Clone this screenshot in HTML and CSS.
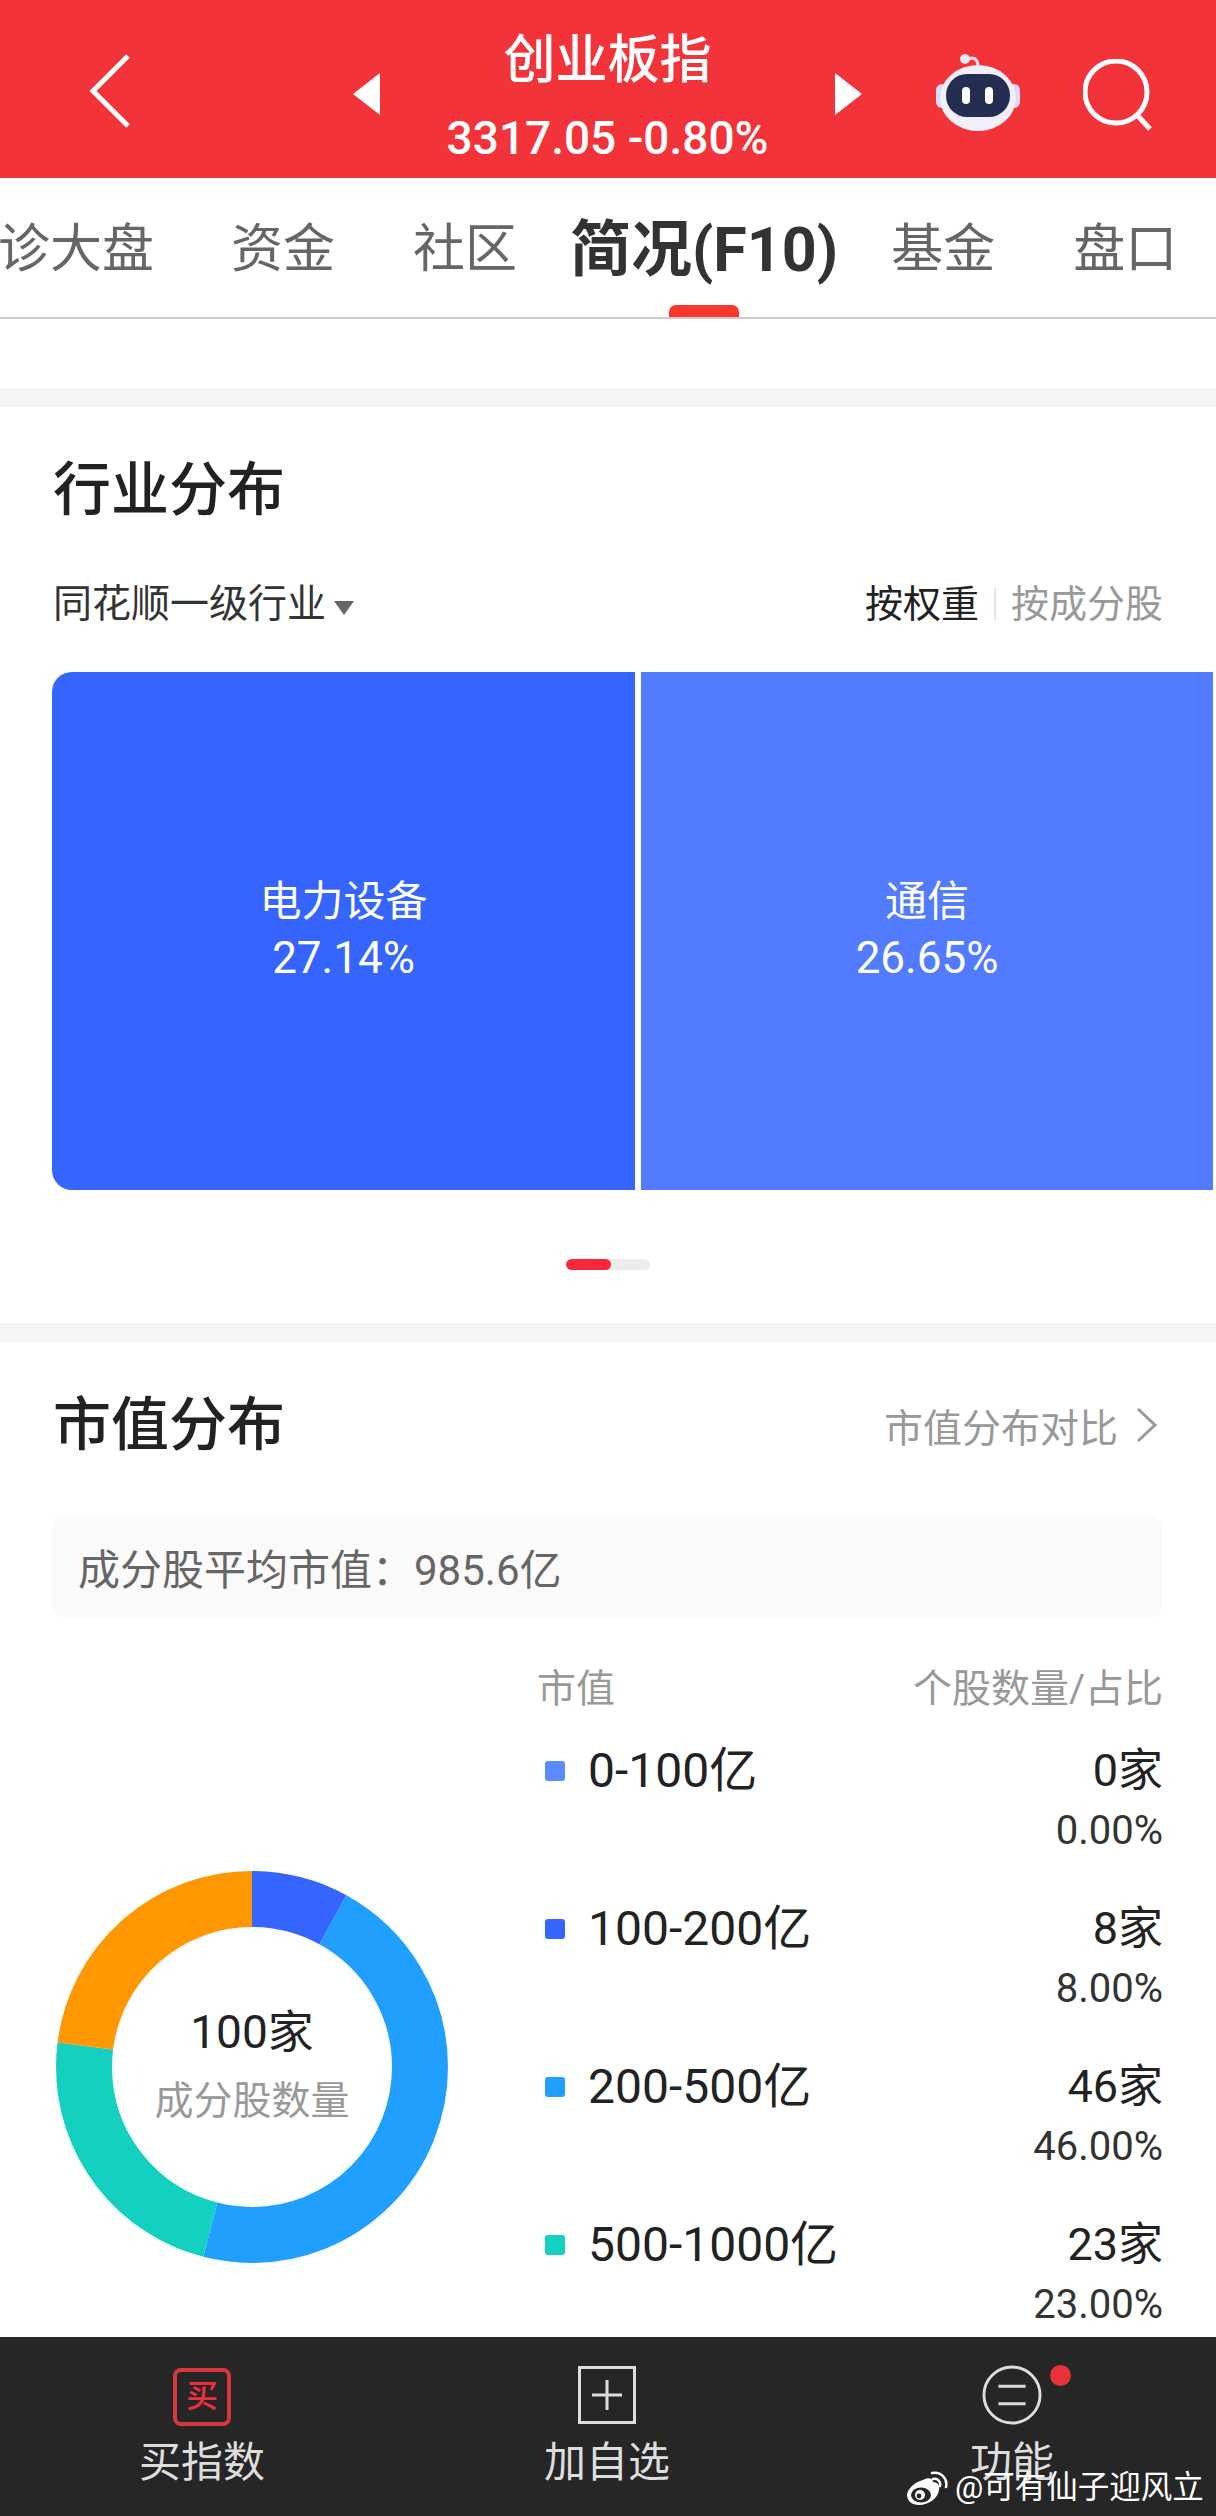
FILE: index.html
```html
<!DOCTYPE html>
<html lang="zh-CN">

<head>
    <meta charset="UTF-8">
    <meta name="viewport" content="width=device-width, initial-scale=1.0">
    <title>创业板指</title>
    <link rel="stylesheet" href="styles.css">
</head>

<body>

    <header class="topbar">
        <svg class="back" width="44" height="76" viewBox="0 0 44 76">
            <path d="M40 3 L5 38 L40 73" fill="none" stroke="#fff" stroke-width="5"/>
        </svg>
        <div class="index-switch">
            <span class="tri tri-left"></span>
            <div class="index-name">
                <div class="index-title">创业板指</div>
                <div class="index-quote">3317.05 -0.80%</div>
            </div>
            <span class="tri tri-right"></span>
        </div>
        <svg class="robot" width="84" height="80" viewBox="0 0 84 80">
            <path d="M31 9 C36 5 42 7 42 16" fill="none" stroke="#f3e6f2" stroke-width="3"/>
            <circle cx="29" cy="8" r="5" fill="#f3e6f2"/>
            <rect x="0" y="33" width="12" height="24" rx="6" fill="#dcd9f2"/>
            <rect x="72" y="33" width="12" height="24" rx="6" fill="#dcd9f2"/>
            <ellipse cx="42" cy="47" rx="38" ry="33" fill="#f2effa"/>
            <rect x="10" y="23" width="64" height="43" rx="21" fill="#242e52"/>
            <rect x="26" y="36" width="8" height="17" rx="4" fill="#fff"/>
            <rect x="49" y="36" width="8" height="17" rx="4" fill="#fff"/>
        </svg>
        <svg class="search" width="70" height="72" viewBox="0 0 70 72">
            <circle cx="33" cy="33" r="31" fill="none" stroke="#fff" stroke-width="5"/>
            <path d="M55 57 L67 70" fill="none" stroke="#fff" stroke-width="5"/>
        </svg>
    </header>

    <nav class="tabs">
        <span class="tab tab-first">诊大盘</span>
        <span class="tab">资金</span>
        <span class="tab">社区</span>
        <span class="tab tab-active">简况(F10)</span>
        <span class="tab">基金</span>
        <span class="tab">盘口</span>
    </nav>

    <main class="content">
        <div class="spacer"></div>

        <section class="card card-industry">
            <h2 class="card-title">行业分布</h2>
            <div class="filter-row">
                <div class="filter-left">同花顺一级行业<span class="caret"></span></div>
                <div class="filter-right">
                    <span class="on">按权重</span>
                    <span class="sep"></span>
                    <span class="off">按成分股</span>
                </div>
            </div>
            <div class="treemap">
                <div class="block block-a">
                    <div class="block-name">电力设备</div>
                    <div class="block-val">27.14%</div>
                </div>
                <div class="block block-b">
                    <div class="block-name">通信</div>
                    <div class="block-val">26.65%</div>
                </div>
            </div>
            <div class="pager"><span class="pager-on"></span></div>
        </section>

        <section class="card card-cap">
            <div class="cap-head">
                <h2 class="card-title">市值分布</h2>
                <div class="cap-link">市值分布对比
                    <svg width="22" height="36" viewBox="0 0 22 36">
                        <path d="M2 2 L19 18 L2 34" fill="none" stroke="#999" stroke-width="3"/>
                    </svg>
                </div>
            </div>
            <div class="avg-box">成分股平均市值：985.6亿</div>

            <div class="cap-body">
                <div class="donut">
                    <svg width="392" height="392" viewBox="0 0 392 392">
                        <g fill="none" stroke-width="56" transform="rotate(-90 196 196)">
                            <circle cx="196" cy="196" r="168" pathLength="100" stroke="#3564ff" stroke-dasharray="8 92"/>
                            <circle cx="196" cy="196" r="168" pathLength="100" stroke="#209fff" stroke-dasharray="46 54" stroke-dashoffset="-8"/>
                            <circle cx="196" cy="196" r="168" pathLength="100" stroke="#13d0c0" stroke-dasharray="23 77" stroke-dashoffset="-54"/>
                            <circle cx="196" cy="196" r="168" pathLength="100" stroke="#ff9800" stroke-dasharray="23 77" stroke-dashoffset="-77"/>
                        </g>
                    </svg>
                    <div class="donut-label">
                        <div class="donut-num">100家</div>
                        <div class="donut-text">成分股数量</div>
                    </div>
                </div>

                <div class="cap-table">
                    <div class="cap-table-head">
                        <span>市值</span>
                        <span>个股数量/占比</span>
                    </div>
                    <div class="cap-row">
                        <div class="cap-range"><i class="dot dot1"></i>0-100亿</div>
                        <div class="cap-nums"><div class="cap-count">0家</div><div class="cap-pct">0.00%</div></div>
                    </div>
                    <div class="cap-row">
                        <div class="cap-range"><i class="dot dot2"></i>100-200亿</div>
                        <div class="cap-nums"><div class="cap-count">8家</div><div class="cap-pct">8.00%</div></div>
                    </div>
                    <div class="cap-row">
                        <div class="cap-range"><i class="dot dot3"></i>200-500亿</div>
                        <div class="cap-nums"><div class="cap-count">46家</div><div class="cap-pct">46.00%</div></div>
                    </div>
                    <div class="cap-row">
                        <div class="cap-range"><i class="dot dot4"></i>500-1000亿</div>
                        <div class="cap-nums"><div class="cap-count">23家</div><div class="cap-pct">23.00%</div></div>
                    </div>
                </div>
            </div>
        </section>
    </main>

    <footer class="bottombar">
        <div class="action">
            <span class="buy-icon">买</span>
            <span class="action-label">买指数</span>
        </div>
        <div class="action">
            <svg class="action-icon" width="58" height="58" viewBox="0 0 58 58">
                <rect x="1.5" y="1.5" width="55" height="55" fill="none" stroke="#ddd" stroke-width="3"/>
                <path d="M14 29 H44 M29 14 V44" fill="none" stroke="#ddd" stroke-width="3"/>
            </svg>
            <span class="action-label">加自选</span>
        </div>
        <div class="action">
            <svg class="action-icon" width="62" height="62" viewBox="0 0 62 62">
                <circle cx="31" cy="31" r="29" fill="none" stroke="#ddd" stroke-width="3"/>
                <path d="M17 22 H45 M17 40 H45" fill="none" stroke="#ddd" stroke-width="3"/>
            </svg>
            <span class="action-label">功能</span>
            <span class="badge"></span>
        </div>
    </footer>

    <div class="watermark">
        <svg width="42" height="35" viewBox="0 0 42 35">
            <path d="M17 9 C22 6 27 7 27 11 C32 11 34 15 33 19 C32 27 23 34 13 34 C6 34 1 30 1 24 C1 18 9 11 17 9 Z" fill="#fff"/>
            <ellipse cx="15" cy="24" rx="10" ry="7.5" fill="#262626"/>
            <circle cx="14" cy="24" r="5" fill="#fff"/>
            <circle cx="13" cy="25" r="2.4" fill="#262626"/>
            <path d="M26 2 C35 0 42 8 40 16 M27 8 C32 7 35 11 34 15" fill="none" stroke="#fff" stroke-width="2.5" stroke-linecap="round"/>
        </svg>
        <span>@可有仙子迎风立</span>
    </div>

</body>

</html>
```

FILE: styles.css
```css
* {
    box-sizing: border-box;
}

html,
body {
    margin: 0;
    height: 100%;
}

body {
    width: 1216px;
    height: 2516px;
    display: flex;
    flex-direction: column;
    overflow: hidden;
    position: relative;
    background: #fff;
    color: #222;
    font-family: Roboto, "Noto Sans CJK SC", sans-serif;
}

/* top red bar */
.topbar {
    height: 178px;
    flex: none;
    background: #f23339;
    display: flex;
    align-items: center;
    position: relative;
    color: #fff;
}

.back {
    margin-left: 88px;
    margin-top: 4px;
}

.index-switch {
    display: flex;
    align-items: center;
    margin-left: 221px;
    width: 509px;
    justify-content: space-between;
    margin-top: 10px;
}

.tri {
    width: 0;
    height: 0;
    border-top: 21px solid transparent;
    border-bottom: 21px solid transparent;
}

.tri-left {
    border-right: 27px solid #fff;
}

.tri-right {
    border-left: 27px solid #fff;
}

.index-name {
    text-align: center;
    margin-top: 6px;
}

.index-title {
    font-size: 52px;
    font-weight: 500;
    line-height: 60px;
}

.index-quote {
    font-size: 46px;
    font-weight: 500;
    line-height: 50px;
    margin-top: 22px;
    white-space: nowrap;
}

.robot {
    margin-left: 74px;
    margin-top: 4px;
}

.search {
    margin-left: 63px;
    margin-top: 11px;
}

/* tabs */
.tabs {
    height: 141px;
    flex: none;
    display: flex;
    align-items: center;
    border-bottom: 2px solid #ccc;
    overflow: hidden;
    padding-top: 4px;
}

.tab {
    font-size: 52px;
    line-height: 60px;
    color: #666;
    padding: 0 39px;
    white-space: nowrap;
    flex: none;
}

.tab-first {
    padding: 0 38px 0 0;
    margin-left: -2px;
}

.tab-active {
    font-size: 61px;
    font-weight: 700;
    color: #333;
    padding: 0 14px;
    position: relative;
}

.tab-active::after {
    content: "";
    position: absolute;
    left: 50%;
    bottom: -39px;
    width: 70px;
    height: 14px;
    margin-left: -35px;
    border-radius: 7px 7px 0 0;
    background: #f5372e;
}

.content {
    flex: 1;
    min-height: 0;
    overflow: hidden;
    background: #f5f5f5;
}

.spacer {
    height: 69px;
    background: #fff;
}

.card {
    background: #fff;
    padding: 0 53px;
}

.card-industry {
    height: 916px;
    margin-top: 19px;
    padding-top: 50px;
}

.card-cap {
    margin-top: 19px;
    padding-top: 50px;
    height: 1100px;
}

.card-title {
    margin: 0;
    font-size: 58px;
    line-height: 66px;
    font-weight: 500;
    color: #222;
}

.filter-row {
    display: flex;
    justify-content: space-between;
    align-items: center;
    margin-top: 56px;
    font-size: 38px;
    line-height: 50px;
}

.filter-left {
    display: flex;
    align-items: center;
    font-size: 39px;
    color: #333;
}

.caret {
    width: 0;
    height: 0;
    margin-left: 8px;
    margin-top: 8px;
    border-left: 10px solid transparent;
    border-right: 10px solid transparent;
    border-top: 14px solid #666;
}

.filter-right {
    display: flex;
    align-items: center;
}

.on {
    color: #222;
}

.off {
    color: #999;
}

.sep {
    width: 2px;
    height: 32px;
    margin: 0 15px;
    background: #e4e4e4;
}

/* treemap runs off the right edge */
.treemap {
    display: flex;
    gap: 6px;
    height: 518px;
    margin-top: 43px;
    margin-right: -50px;
    margin-left: -1px;
}

.block {
    color: #fff;
    display: flex;
    flex-direction: column;
    align-items: center;
    justify-content: center;
    text-align: center;
    padding-bottom: 3px;
}

.block-a {
    width: 583px;
    background: #3564ff;
    border-radius: 20px 0 0 20px;
}

.block-b {
    flex: 1;
    background: #527bff;
}

.block-name {
    font-size: 42px;
    line-height: 56px;
}

.block-val {
    font-size: 44px;
    line-height: 56px;
}

.pager {
    width: 84px;
    height: 11px;
    margin: 69px auto 0;
    background: #ececec;
    border-radius: 6px;
    overflow: hidden;
}

.pager-on {
    display: block;
    width: 45px;
    height: 11px;
    border-radius: 6px;
    background: #f5283c;
}

.cap-head {
    display: flex;
    justify-content: space-between;
    align-items: center;
}

.cap-link {
    display: flex;
    align-items: center;
    gap: 18px;
    font-size: 39px;
    color: #999;
    margin-right: 5px;
}

.avg-box {
    height: 103px;
    margin-top: 57px;
    margin-left: -1px;
    padding-left: 26px;
    display: flex;
    align-items: center;
    border-radius: 14px;
    background: #fafafa;
    font-size: 42px;
    color: #666;
}

.cap-body {
    display: flex;
    position: relative;
}

.donut {
    width: 392px;
    height: 392px;
    position: absolute;
    left: 3px;
    top: 253px;
}

.donut-label {
    position: absolute;
    inset: 0;
    display: flex;
    flex-direction: column;
    align-items: center;
    justify-content: center;
}

.donut-num {
    font-size: 46px;
    line-height: 56px;
    color: #222;
    margin-top: -4px;
}

.donut-text {
    font-size: 39px;
    line-height: 50px;
    margin-top: 16px;
    color: #999;
}

.cap-table {
    width: 626px;
    margin-left: 484px;
}

.cap-table-head {
    display: flex;
    justify-content: space-between;
    margin-top: 46px;
    font-size: 39px;
    line-height: 50px;
    color: #999;
}

.cap-row {
    height: 158px;
    display: flex;
    justify-content: space-between;
    align-items: flex-start;
}

.cap-table-head + .cap-row {
    margin-top: 27px;
}

.cap-range {
    display: flex;
    align-items: center;
    font-size: 48px;
    line-height: 60px;
    color: #222;
}

.dot {
    width: 20px;
    height: 20px;
    margin: 0 23px 0 8px;
    border-radius: 3px;
}

.dot1 {
    background: #5c8aff;
}

.dot2 {
    background: #3564ff;
}

.dot3 {
    background: #209fff;
}

.dot4 {
    background: #13d0c0;
}

.cap-nums {
    text-align: right;
}

.cap-count {
    font-size: 45px;
    line-height: 60px;
    color: #222;
}

.cap-pct {
    font-size: 40px;
    line-height: 50px;
    margin-top: 5px;
    color: #333;
}

/* bottom actions */
.bottombar {
    height: 179px;
    flex: none;
    background: #262626;
    display: flex;
    gap: 153px;
    color: #ddd;
    padding: 28px 0 0 76px;
}

.action {
    width: 252px;
    display: flex;
    flex-direction: column;
    align-items: center;
    position: relative;
}

.action-icon {
    height: 60px;
}

.action-label {
    font-size: 42px;
    line-height: 50px;
    margin-top: 13px;
}

.buy-icon {
    width: 58px;
    height: 58px;
    margin-top: 3px;
    margin-bottom: -1px;
    border: 4px solid #d8383d;
    border-radius: 8px;
    color: #ee2f3c;
    font-size: 32px;
    font-weight: 500;
    line-height: 48px;
    text-align: center;
}

.badge {
    position: absolute;
    width: 21px;
    height: 21px;
    border-radius: 50%;
    background: #e8333a;
    top: 0;
    left: 164px;
}

.watermark {
    position: absolute;
    left: 906px;
    top: 2468px;
    display: flex;
    align-items: center;
    gap: 7px;
    color: #fff;
    font-size: 31.5px;
    line-height: 40px;
    white-space: nowrap;
}
```
